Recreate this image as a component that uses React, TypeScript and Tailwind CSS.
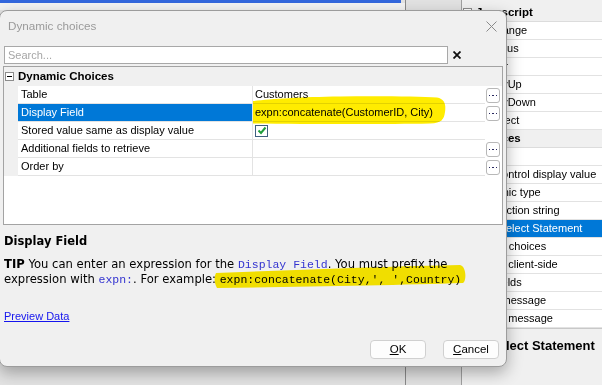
import React from "react";

const ui = "font-['Liberation_Sans',Arial,sans-serif]";

function Dots() {
  return (
    <div className="ml-[1px] mt-[2px] w-[14px] h-[15px] rounded-[3px] border border-[#b8b8b8] bg-white flex items-center justify-center gap-[2px]">
      <span className="w-[1.5px] h-[1.5px] bg-[#2a2a60]" />
      <span className="w-[1.5px] h-[1.5px] bg-[#2a2a60]" />
      <span className="w-[1.5px] h-[1.5px] bg-[#2a2a60]" />
    </div>
  );
}

type Row = { name: string; value?: React.ReactNode; btn: boolean; sel?: boolean };

const gridRows: Row[] = [
  { name: "Table", value: "Customers", btn: true },
  { name: "Display Field", value: "expn:concatenate(CustomerID, City)", btn: true, sel: true },
  {
    name: "Stored value same as display value",
    value: (
      <div className="w-[13px] h-[12px] border border-[#3f5f80] bg-white flex items-center justify-center">
        <svg width="10" height="9" viewBox="0 0 10 9">
          <polyline points="1.5,4.5 4,7 8.5,1.5" fill="none" stroke="#1f9d3c" strokeWidth="2" />
        </svg>
      </div>
    ),
    btn: false,
  },
  { name: "Additional fields to retrieve", value: "", btn: true },
  { name: "Order by", value: "", btn: true },
];

type PRow = { label: string; header?: boolean; sel?: boolean };
const panelRows: PRow[] = [
  { label: "Javascript", header: true },
  { label: "OnChange" },
  { label: "OnFocus" },
  { label: "OnBlur" },
  { label: "OnKeyUp" },
  { label: "OnKeyDown" },
  { label: "OnSelect" },
  { label: "Choices", header: true },
  { label: "Table" },
  { label: "Use control display value" },
  { label: "Dynamic type" },
  { label: "Connection string" },
  { label: "SQL Select Statement", sel: true },
  { label: "Cache choices" },
  { label: "Filter - client-side" },
  { label: "Key fields" },
  { label: "Error message" },
  { label: "Empty message" },
];

const mono = "font-['Liberation_Mono','Courier_New',monospace] text-[11.5px]";

export default function App() {
  return (
    <div className={`relative w-[602px] h-[385px] overflow-hidden flex bg-[#e4e4e4] ${ui}`}>
      {/* background application */}
      <div className="w-[405px] flex flex-col bg-[#e3e3e3]">
        <div className="h-[3px] bg-[#3367dd] mr-[4px]" />
        <div className="h-[7px] bg-[#f3f3f3]" />
        <div className="flex-1" />
      </div>
      <div className="w-px bg-[#8a8a8a]" />
      <div className="w-[55px] bg-[#e2e2e2]" />
      <div className="w-[141px] border-l border-[#a0a0a0] bg-[#f0f0f0] flex flex-col pt-[4px]">
        {panelRows.map((r, i) =>
          r.header ? (
            <div key={i} className="h-[18px] bg-[#f0f0f0] border-b border-[#dcdcdc] flex items-center">
              <div className="ml-[1px] w-[9px] h-[9px] border border-[#8c8c8c] bg-white flex items-center justify-center">
                <div className="w-[5px] h-px bg-black" />
              </div>
              <span className="ml-[4px] text-[11.5px] font-bold text-black whitespace-nowrap">{r.label}</span>
            </div>
          ) : (
            <div
              key={i}
              className={`h-[18px] border-b border-[#e2e2e2] flex items-center pl-[12px] text-[11px] whitespace-nowrap ${
                r.sel ? "bg-[#0078d7] text-white" : "bg-white text-black"
              }`}
            >
              {r.label}
            </div>
          )
        )}
        <div className="border-t border-[#c8c8c8] pt-[9px] pl-[28px] text-[13px] font-bold text-black whitespace-nowrap leading-[16px]">
          Select Statement
        </div>
      </div>

      {/* dialog */}
      <div className="absolute left-[-1px] top-[10px] w-[508px] h-[357px] rounded-[8px] border border-[#9c9c9c] bg-[#f0f0f0] shadow-[0_6px_16px_rgba(0,0,0,0.3)] flex flex-col overflow-hidden">
        <div className="h-[30px] flex items-center justify-between pl-[8px] pr-[9px]">
          <span className="text-[11.7px] text-[#9a9a9a]">Dynamic choices</span>
          <svg width="11" height="11" viewBox="0 0 11 11">
            <path d="M0.5 0.5 L10.5 10.5 M10.5 0.5 L0.5 10.5" stroke="#8a8a8a" strokeWidth="1" />
          </svg>
        </div>

        <div className="mt-[5px] flex items-center h-[18px]">
          <div className="ml-[4px] w-[444px] h-[18px] bg-white border border-[#a8a8a8] px-[3px] flex items-center text-[11px] text-[#a6a6a6]">
            Search...
          </div>
          <svg className="ml-[5px]" width="8" height="8" viewBox="0 0 8 8">
            <path d="M0.5 0.5 L7.5 7.5 M7.5 0.5 L0.5 7.5" stroke="#111" strokeWidth="1.8" />
          </svg>
        </div>

        <div className="mt-[2px] ml-[3px] w-[500px] h-[159px] border border-[#a3a3a3] bg-white flex flex-col">
          <div className="h-[19px] bg-[#f0f0f0] flex items-center">
            <div className="ml-[1px] w-[9px] h-[9px] border border-[#8c8c8c] bg-white flex items-center justify-center">
              <div className="w-[5px] h-px bg-black" />
            </div>
            <span className="ml-[4px] text-[11.5px] font-bold text-black">Dynamic Choices</span>
          </div>
          {gridRows.map((r, i) => (
            <div key={i} className="h-[18px] flex">
              <div className="w-[14px] bg-[#f0f0f0]" />
              <div
                className={`w-[234px] border-b border-[#e3e3e3] pl-[3px] flex items-center text-[11px] whitespace-nowrap ${
                  r.sel ? "bg-[#0078d7] text-white" : "text-black"
                }`}
              >
                {r.name}
              </div>
              <div className="w-[233px] border-l border-b border-[#e3e3e3] pl-[2px] flex items-center text-[11px] text-black whitespace-nowrap">
                {r.value}
              </div>
              <div className="w-[17px]">{r.btn ? <Dots /> : null}</div>
            </div>
          ))}
          <div className="flex-1" />
        </div>

        <div className="px-[4px] font-['DejaVu_Sans',Verdana,sans-serif] text-black">
          <div className="mt-[8px] h-[16px] leading-[16px] text-[11.5px] font-bold">Display Field</div>
          <p className="mt-[8px] text-[11.6px] leading-[14px] whitespace-nowrap">
            <b>TIP</b> You can enter an expression for the{" "}
            <span className={`${mono} text-[#3434d0]`}>Display Field</span>. You must prefix the
            <br />
            expression with <span className={`${mono} text-[#3434d0]`}>expn:</span>. For example:{" "}
            <span className={`${mono} text-black`}>expn:concatenate(City,', ',Country)</span>
          </p>
          <div className={`mt-[22px] leading-[14px] text-[11px] ${ui}`}>
            <span className="text-[#1414ee] underline">Preview Data</span>
          </div>
        </div>

        <div className="flex-1" />
        <div className="flex justify-end gap-[17px] pr-[7px] mb-[7px]">
          <div className="w-[56px] h-[19px] rounded-[4px] border border-[#d0d0d0] bg-[#fdfdfd] flex items-center justify-center text-[11.5px] text-black">
            <span className="underline">O</span>K
          </div>
          <div className="w-[56px] h-[19px] rounded-[4px] border border-[#d0d0d0] bg-[#fdfdfd] flex items-center justify-center text-[11.5px] text-black">
            <span className="underline">C</span>ancel
          </div>
        </div>

        {/* highlighter marks */}
        <svg className="absolute left-0 top-0 mix-blend-multiply pointer-events-none" width="506" height="355" viewBox="0 0 506 355">
          <path
            d="M253,90 C270,88 300,86 340,85.5 C380,85 420,85.5 437,86.5 C445,88 446,94 445,101 C444,108 442,112 430,112.5 C380,113.5 300,113 253,112.5 Z"
            fill="#ffec00"
          />
          <path
            d="M216,262 C300,259 400,255 460,254 C466,255 467,269 463,272 C400,274 300,276 217,277 C214,272 214,266 216,262 Z"
            fill="#ffec00"
          />
        </svg>
      </div>
    </div>
  );
}
